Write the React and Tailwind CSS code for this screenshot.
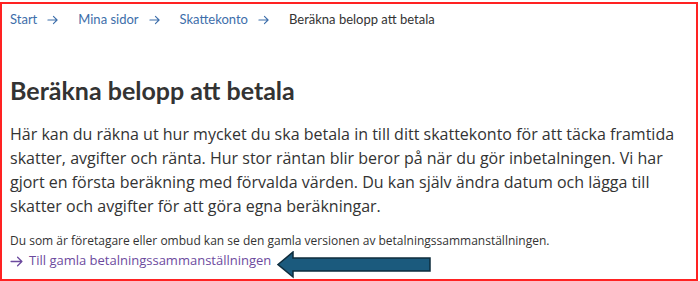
import React from 'react';

const crumbs = ['Start', 'Mina sidor', 'Skattekonto'];

const Arrow = ({ className }) => (
  <svg className={className} viewBox="0 0 12 10" fill="none" stroke="currentColor" strokeWidth="1.2" strokeLinecap="round" strokeLinejoin="round">
    <path d="M1 5h10M7 1l4 4-4 4" />
  </svg>
);

const App = () => {
  return (
    <div className="relative w-[700px] h-[281px] bg-white overflow-hidden">
      <div className="mt-[2px] w-[698px] h-[279px] border-2 border-[#f22] px-2 pt-[6px]">
        {/* Breadcrumb */}
        <nav className="flex items-center h-5 text-[13px] font-['Lato',sans-serif]">
          {crumbs.map((c) => (
            <div key={c} className="flex items-center">
              <span className="text-[#3d6eaa]">{c}</span>
              <Arrow className="w-[11px] h-[10px] ml-[10px] mr-[20px] text-[#3d6eaa]" />
            </div>
          ))}
          <span className="text-[#333]">Beräkna belopp att betala</span>
        </nav>

        {/* Heading */}
        <h1 className="mt-[44px] text-[25px] leading-8 font-bold text-[#333] font-['Lato',sans-serif]">
          Beräkna belopp att betala
        </h1>

        {/* Intro */}
        <p className="mt-[16px] text-[16px] leading-6 text-[#333] font-['Open_Sans',sans-serif]">
          Här kan du räkna ut hur mycket du ska betala in till ditt skattekonto för att täcka framtida skatter, avgifter och ränta. Hur stor räntan blir beror på när du gör inbetalningen. Vi har gjort en första beräkning med förvalda värden. Du kan själv ändra datum och lägga till skatter och avgifter för att göra egna beräkningar.
        </p>

        <p className="mt-[13px] text-[12px] leading-5 text-[#333] font-['Open_Sans',sans-serif]">
          Du som är företagare eller ombud kan se den gamla versionen av betalningssammanställningen.
        </p>
        <a className="flex items-center h-5 text-[13px] text-[#6c4a9e] font-['Open_Sans',sans-serif]">
          <Arrow className="w-[13px] h-[11px] mr-[6px]" />
          Till gamla betalningssammanställningen
        </a>
      </div>

      {/* Annotation arrow */}
      <svg className="absolute left-[277px] top-[251px] w-[156px] h-[28px]" viewBox="0 0 156 28">
        <path d="M1 13.5 L16 1 L16 7 L153 7 L153 20 L16 20 L16 26 Z" fill="#1b5a7d" stroke="#0e2c3c" strokeWidth="1.5" strokeLinejoin="miter" />
      </svg>
    </div>
  );
};

export default App;
